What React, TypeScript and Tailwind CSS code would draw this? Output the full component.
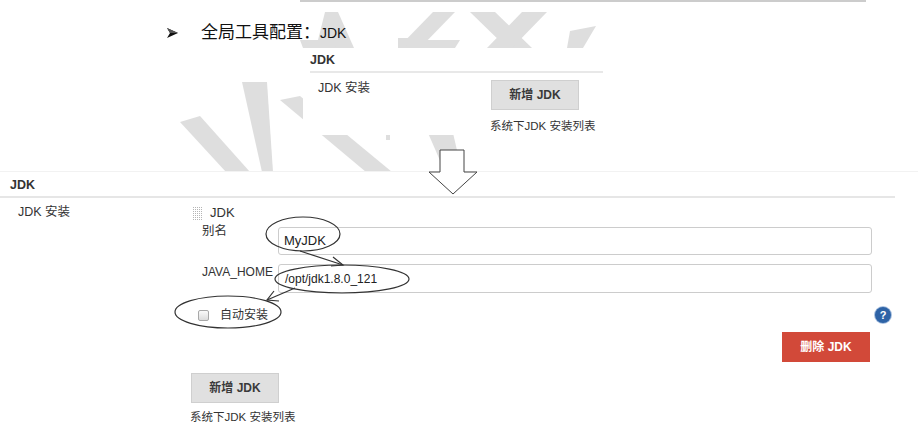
import React from 'react';

const wm = '#dedede';

function Watermark() {
  return (
    <svg className="absolute inset-0" width="918" height="430" viewBox="0 0 918 430">
      <g fill={wm}>
        <polygon points="325,12 338,12 354,48 316,48" />
        <polygon points="433,12 455,12 420,48 398,48" />
        <rect x="398" y="38" width="18" height="10" />
        <polygon points="470,12 495,12 532,48 507,48" />
        <polygon points="522,12 547,12 512,48 487,48" />
        <polygon points="570,31 596,26 583,48 567,48" />
        <polygon points="180,122 200,116 250,172 226,172" />
        <polygon points="242,82 267,82 273,172 262,172" />
        <polygon points="280,100 300,96 392,172 366,172" />
        <polygon points="300,40 333,40 336,48 303,48" />
        <polygon points="410,40 460,40 455,48 405,48" />
        <polygon points="428,133 453,133 462,172 445,172" />
        <rect x="386" y="135" width="4" height="5" />
      </g>
    </svg>
  );
}

function Annotations() {
  return (
    <svg className="absolute inset-0 pointer-events-none" width="918" height="430" viewBox="0 0 918 430">
      <polygon
        points="440,150 464,150 464,172 477,172 453,194 429,172 440,172"
        fill="white"
        stroke="#444"
        strokeWidth="1"
      />
      <g fill="none" stroke="#333" strokeWidth="1.2">
        <ellipse cx="303" cy="234" rx="37" ry="17" />
        <ellipse cx="342" cy="279" rx="67" ry="14" />
        <ellipse cx="228" cy="312" rx="53" ry="16" />
        <line x1="300" y1="251" x2="343" y2="265" />
        <polyline points="333,257 343,265 331,266" />
        <line x1="295" y1="288" x2="267" y2="300" />
        <polyline points="279,301 267,300 274,291" />
      </g>
    </svg>
  );
}

function Bullet() {
  return (
    <svg width="11" height="10" viewBox="0 0 11 10">
      <polygon points="0,0 11,5 0,10 3,5" fill="#111" />
      <polygon points="0,0 11,5 3,5" fill="#555" />
    </svg>
  );
}

function GridIcon() {
  const dots = [];
  for (let y = 0; y < 13; y += 2) {
    for (let x = 0; x < 10; x += 2) {
      dots.push(<rect key={`${x}-${y}`} x={x} y={y} width="1" height="1" />);
    }
  }
  return (
    <svg width="10" height="13" viewBox="0 0 10 13" fill="#b5b5b5">
      {dots}
    </svg>
  );
}

function GrayButton({ label }: { label: string }) {
  return (
    <div className="w-[88px] h-[30px] bg-[#e0e0e0] border border-[#cfcfcf] flex items-center justify-center text-[12px] font-bold text-[#3a3a3a]">
      {label}
    </div>
  );
}

export default function App() {
  return (
    <div className="relative w-[918px] h-[430px] overflow-hidden bg-white text-[#333] font-['Liberation_Sans','Noto_Sans_CJK_SC',sans-serif]">
      <Watermark />
      <div className="relative">
        <div className="ml-[300px] w-[566px] h-[2px] bg-[#cccccc]" />

        <div className="mt-[21px] h-[20px] flex items-center pl-[167px] text-[#111]">
          <span className="w-[34px] flex items-center">
            <Bullet />
          </span>
          <span className="text-[17px] font-['Liberation_Serif','Noto_Sans_CJK_SC',serif]">全局工具配置：</span>
          <span className="text-[14px]">JDK</span>
        </div>

        <div className="mt-[5px] ml-[303px] w-[300px] h-[87px] bg-white">
          <div className="pt-[4px] pl-[7px] text-[12.5px] leading-[16px] font-bold">JDK</div>
          <div className="mt-[3px] ml-[7px] h-[2px] bg-[#e8e8e8]" />
          <div className="pt-[7px] flex">
            <div className="w-[188px] pl-[15px] text-[12.5px] leading-[16px]">JDK 安装</div>
            <div>
              <GrayButton label="新增 JDK" />
              <div className="mt-[8px] -ml-[1px] text-[11.5px] leading-[16px]">系统下JDK 安装列表</div>
            </div>
          </div>
        </div>

        <div className="mt-[36px] bg-white border-t border-[#f2f2f2] h-[259px]">
          <div className="pt-[5px] pl-[10px] text-[12.5px] leading-[16px] font-bold">JDK</div>
          <div className="mt-[3px] w-[895px] h-[2px] bg-[#e6e6e6]" />
          <div className="flex">
            <div className="w-[191px] pt-[6px] pl-[18px] text-[12.5px] leading-[16px]">JDK 安装</div>
            <div className="w-[704px]">
              <div className="pt-[7px] h-[23px] flex items-center pl-[2px]">
                <GridIcon />
                <span className="ml-[7px] text-[13px] leading-[16px]">JDK</span>
              </div>
              <div className="mt-[2px] flex items-start">
                <div className="w-[87px] pl-[11px] text-[12.5px] leading-[16px]">别名</div>
                <div className="mt-[4px] w-[594px] h-[28px] border border-[#cccccc] rounded-[3px] flex items-center pl-[5px] text-[13px] text-[#222]">
                  MyJDK
                </div>
              </div>
              <div className="mt-[9px] flex items-start">
                <div className="w-[87px] pl-[11px] text-[12px] leading-[16px]">JAVA_HOME</div>
                <div className="w-[594px] h-[29px] border border-[#cccccc] rounded-[3px] flex items-center pl-[6px] text-[12px] text-[#222]">
                  /opt/jdk1.8.0_121
                </div>
              </div>
              <div className="mt-[14px] h-[16px] flex items-center pl-[7px]">
                <span className="w-[11px] h-[11px] rounded-[2px] border border-[#a8a8a8] bg-gradient-to-b from-[#fafafa] to-[#dcdcdc]" />
                <span className="ml-[11px] text-[12px] leading-[16px]">自动安装</span>
                <span className="ml-auto mr-[4px] w-[16px] h-[16px] rounded-full bg-[#2e63a6] ring-1 ring-[#a9c1e0] text-white text-[11px] font-bold flex items-center justify-center">
                  ?
                </span>
              </div>
              <div className="mt-[9px] flex justify-end pr-[25px]">
                <div className="w-[88px] h-[30px] bg-[#d24939] flex items-center justify-center text-[12px] font-bold text-white">
                  删除 JDK
                </div>
              </div>
              <div className="mt-[11px]">
                <GrayButton label="新增 JDK" />
              </div>
              <div className="mt-[6px] -ml-[1px] text-[11.5px] leading-[16px]">系统下JDK 安装列表</div>
            </div>
          </div>
        </div>
      </div>
      <Annotations />
    </div>
  );
}
